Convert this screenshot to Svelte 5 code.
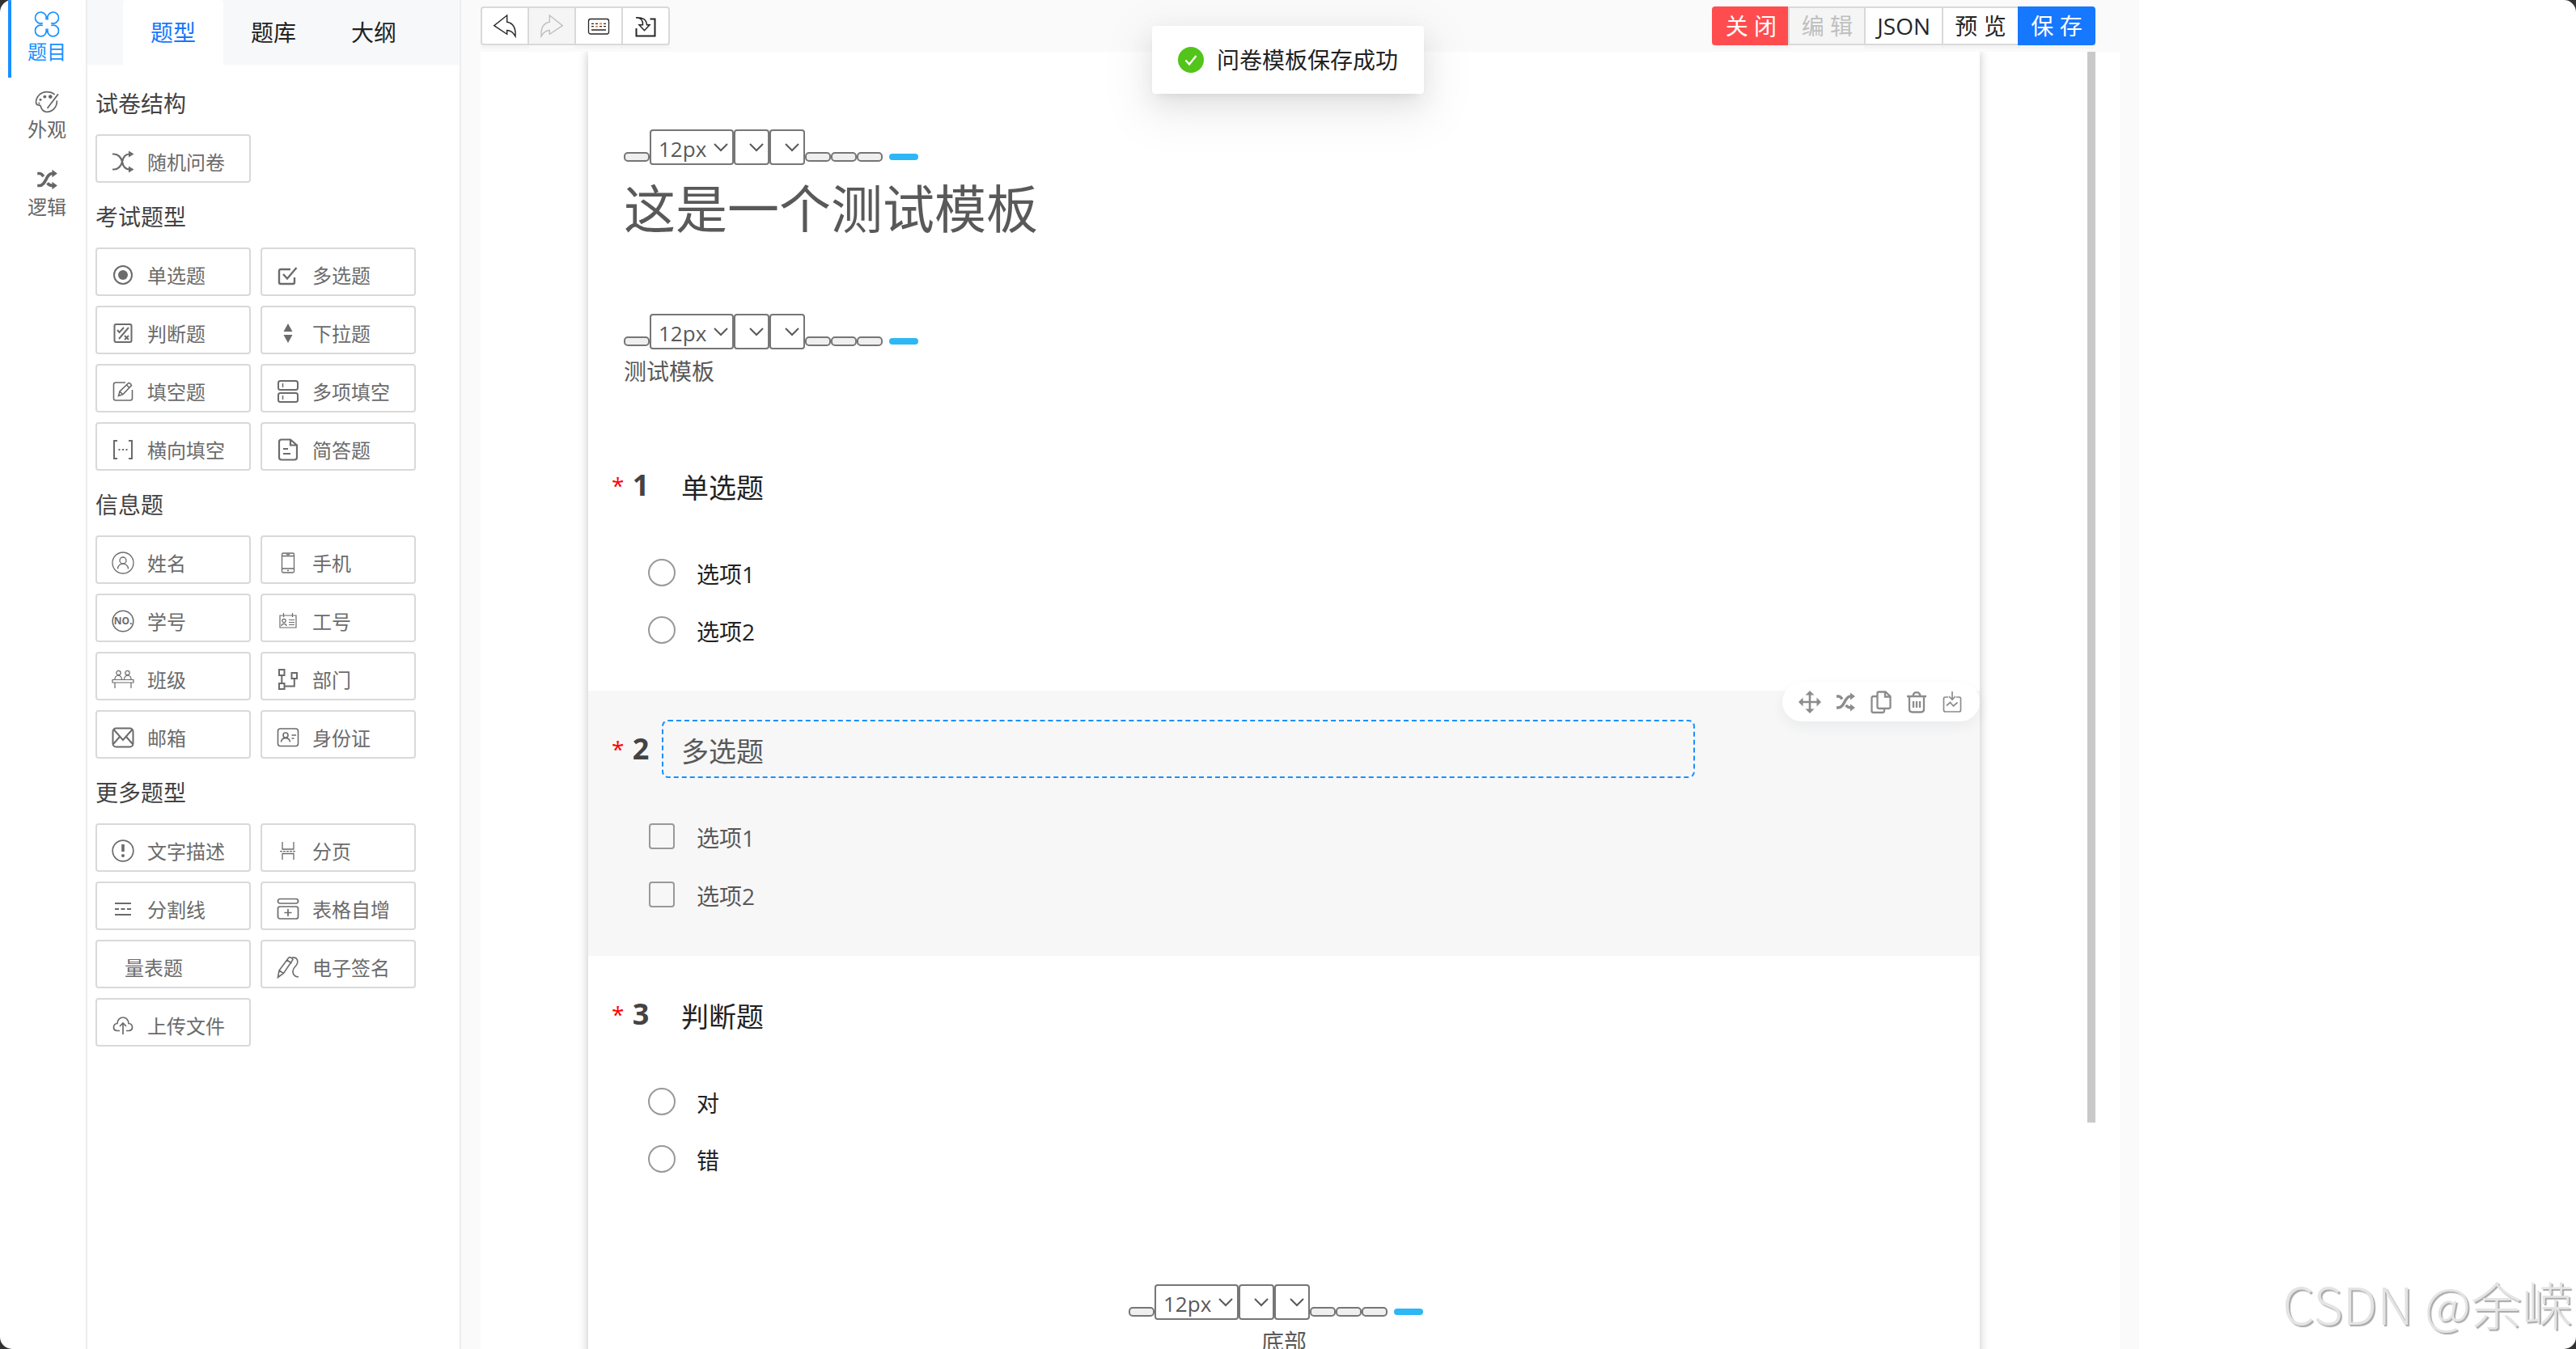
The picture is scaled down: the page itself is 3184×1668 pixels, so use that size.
<script lang="ts">
	type Tool = { label:string, icon?:string };

	const navItems = [
		{ label:'题目', icon:'apps' },
		{ label:'外观', icon:'palette' },
		{ label:'逻辑', icon:'shuffle' },
	];
	const tabs = ['题型', '题库', '大纲'];

	const groups: { title:string, tools:Tool[] }[] = [
		{ title:'试卷结构', tools:[{ label:'随机问卷', icon:'random' }] },
		{ title:'考试题型', tools:[
			{ label:'单选题', icon:'radio' },
			{ label:'多选题', icon:'check' },
			{ label:'判断题', icon:'judge' },
			{ label:'下拉题', icon:'updown' },
			{ label:'填空题', icon:'edit' },
			{ label:'多项填空', icon:'rows' },
			{ label:'横向填空', icon:'bracket' },
			{ label:'简答题', icon:'doc' },
		] },
		{ title:'信息题', tools:[
			{ label:'姓名', icon:'user' },
			{ label:'手机', icon:'phone' },
			{ label:'学号', icon:'number' },
			{ label:'工号', icon:'badge' },
			{ label:'班级', icon:'classroom' },
			{ label:'部门', icon:'dept' },
			{ label:'邮箱', icon:'mail' },
			{ label:'身份证', icon:'idcard' },
		] },
		{ title:'更多题型', tools:[
			{ label:'文字描述', icon:'notice' },
			{ label:'分页', icon:'pagebreak' },
			{ label:'分割线', icon:'divider' },
			{ label:'表格自增', icon:'addrow' },
			{ label:'量表题' },
			{ label:'电子签名', icon:'sign' },
			{ label:'上传文件', icon:'upload' },
		] },
	];

	const historyButtons = [
		{ icon:'undo', title:'撤销' },
		{ icon:'redo', title:'重做', disabled:true },
		{ icon:'keyboard', title:'快捷键' },
		{ icon:'import', title:'导入' },
	];
	const actions = [
		{ label:'关 闭', kind:'danger' },
		{ label:'编 辑', kind:'', disabled:true },
		{ label:'JSON', kind:'' },
		{ label:'预 览', kind:'' },
		{ label:'保 存', kind:'primary' },
	];

	const questions = [
		{ title:'单选题', type:'radio', options:['选项1', '选项2'] },
		{ title:'多选题', type:'checkbox', options:['选项1', '选项2'] },
		{ title:'判断题', type:'radio', options:['对', '错'] },
	];
	const itemTools = [
		{ icon:'move', title:'移动' },
		{ icon:'shuffle', title:'逻辑' },
		{ icon:'copy', title:'复制' },
		{ icon:'trash', title:'删除' },
		{ icon:'save', title:'收藏' },
	];

	let activeNav = $state(0);
	let activeTab = $state(0);
	let activeQuestion = $state(1);

	// everything is drawn on a 28 x 28 grid
	const icons: Record<string, string> = {
		apps:'<path d="M13 8.800A6.500 6.500 0 1 0 9.200 12.600M15 8.800A6.500 6.500 0 1 1 18.800 12.600M13 19.200A6.500 6.500 0 1 1 9.200 15.400M15 19.200A6.500 6.500 0 1 0 18.800 15.400" stroke-width="1.600"/>',
		palette:'<path d="M23 5.500C20 3 17.500 2.500 14 2.500C6 2.500 1 9 1.500 15C2 18.500 4.500 17 6 18C8 19.500 6.500 24.500 13 25.500C20 26.200 26 20 25.500 12.500M27 5L15.500 20L14.500 21.500" stroke-width="1.600"/><g fill="currentColor" stroke="none"><circle cx="11.500" cy="8" r="1.800"/><circle cx="18" cy="8" r="2.200"/><circle cx="6.500" cy="11.500" r="1.400"/><circle cx="5" cy="15.500" r="1"/></g>',
		shuffle:'<path d="M3 7H5.500C8 7 9 9 10 10.500M3 21H5.500C13 21 13 7 20 7H21M14.500 18C16 20 17.500 21 21 21" stroke-width="3.400"/><path d="M20 2.500L26 7L20 11.500ZM20 16.500L26 21L20 25.500Z" fill="currentColor" stroke="none"/>',
		random:'<path d="M1 4.500H3C8 4.500 12 9 13 14C14 19 17 23.500 22 23.500M1 23.500H3C8 23.500 12 19 13 14C14 9 17 4.500 22 4.500" stroke-width="2.200"/><path d="M21 0.500L27.500 4.500L21 8.500ZM21 19.500L27.500 23.500L21 27.500Z" fill="currentColor" stroke="none"/>',
		radio:'<circle cx="14" cy="14" r="11"/><circle cx="14" cy="14" r="6" fill="currentColor" stroke="none"/>',
		check:'<path d="M17 7H5Q3 7 3 9V23Q3 25 5 25H20Q22 25 22 23V17M8 13L13 18.500L24.500 5" stroke-width="2.400"/>',
		judge:'<rect x="3.500" y="3" width="21" height="22" rx="2"/><path d="M7 10L9.500 13L15 7M9 21L21 7M16 17L21 22M21 17L16 22"/>',
		updown:'<path d="M14 2L19.500 12H8.500ZM14 26L19.500 16H8.500Z" fill="currentColor" stroke="none"/>',
		edit:'<path d="M17 3H5Q2.500 3 2.500 5.500V22.500Q2.500 25 5 25H23Q25.500 25 25.500 22.500V12M8.500 19.500L10 14L21 3.500Q23 3 24.500 6.500L14 17.500ZM18.500 6L21.500 9M10 14L13.500 17.500" stroke-width="1.600"/>',
		rows:'<rect x="2" y="1" width="24" height="11" rx="2.500"/><rect x="2" y="16" width="24" height="11" rx="2.500"/><path d="M7.500 4V9M7.500 19V24" stroke-width="1.500"/>',
		bracket:'<path d="M7 3H3V25H7M21 3H25V25H21"/><path d="M8.500 14H10.500M13 14H15M17.500 14H19.500"/>',
		doc:'<path d="M17 1.500H6Q3 1.500 3 4.500V23.500Q3 26.500 6 26.500H22Q25 26.500 25 23.500V8.500ZM17 1.500V8.500H25M8 13H14M8 19H17" stroke-width="2.200"/>',
		user:'<circle cx="14" cy="14" r="13" stroke-width="1.300"/><circle cx="14" cy="11" r="4" stroke-width="1.300"/><path d="M7.500 21.500C7.500 13 20.500 13 20.500 21.500" stroke-width="1.300"/>',
		phone:'<rect x="6.500" y="2" width="15" height="24" rx="1.500" stroke-width="1.300"/><path d="M6.500 5.500H21.500M6.500 21H21.500M12 3.700H16M13 23.500H15" stroke-width="1.300"/>',
		number:'<circle cx="14" cy="14" r="12.800" stroke-width="1.600"/><text x="14" y="18" font-size="12" font-weight="700" text-anchor="middle" fill="currentColor" stroke="none">NO.</text>',
		badge:'<path d="M4 7H24V22H4ZM8.500 4V9M19.500 4V9M15 12.500H22M15 15.500H22M15 18.500H22M6 20C6 16.500 12 16.500 12 20" stroke-width="1.200"/><circle cx="9" cy="13.500" r="2.200" stroke-width="1.200"/>',
		classroom:'<path d="M1 14.500H27V18H1ZM4 18V25M24 18V25M4 14.500C3 7.500 13 7.500 12.500 14.500M15.500 14.500C15 7.500 25 7.500 24 14.500" stroke-width="1.200"/><circle cx="8.500" cy="6" r="2.700" stroke-width="1.200"/><circle cx="19.500" cy="6" r="2.700" stroke-width="1.200"/>',
		dept:'<path d="M3 2H9.500V9H3ZM3 19H9.500V26H3ZM18.500 6H25V13H18.500ZM6.300 9V19M9.500 22.500H21.800V13"/>',
		mail:'<rect x="1.500" y="2.500" width="25" height="23" rx="4"/><path d="M2.500 4L14 17L25.500 4M2 22L10 13M26 22L18 13"/>',
		idcard:'<rect x="1.500" y="3" width="25" height="21.500" rx="3" stroke-width="1.600"/><circle cx="11" cy="11" r="3" stroke-width="1.600"/><path d="M5.500 19.500C6 13 16 13 16.500 19.500M18.500 11H24M18.500 15H21.500" stroke-width="1.600"/>',
		notice:'<circle cx="14" cy="14" r="12.800" stroke-width="1.700"/><path d="M14 6V15" stroke-width="3.600"/><circle cx="14" cy="20" r="2" fill="currentColor" stroke="none"/>',
		pagebreak:'<path d="M7 3V12H21V3M7 25V17.500H21V25" stroke-width="1.300"/><path d="M4 14.700H24" stroke-width="1.300" stroke-dasharray="3 1"/>',
		divider:'<path d="M4 7H24M4 21H24M4 14H9M11.500 14H16.500M19 14H24" stroke-width="2.200"/>',
		addrow:'<rect x="1.500" y="1.500" width="25" height="5.500" rx="2.500" stroke-width="1.700"/><rect x="1.500" y="11" width="25" height="15" rx="2.500" stroke-width="1.700"/><path d="M14 14V23M9.500 18.500H18.500" stroke-width="1.700"/>',
		sign:'<path d="M1.500 26.500L3 18L14.500 2.500Q17 0 20 4.500L8.500 21.500ZM3 18L8.500 21.500M12.500 5L18.500 9M19 2C26 1 28 8 23 13C19 17 18 25 27 26" stroke-width="1.600"/>',
		upload:'<path d="M10 20.500H7C0.500 20 1.500 12 7 11.500C7.500 1.500 20.500 1.500 21 11.500C26.500 12 27.500 20 21 20.500H18M14 25V11M10 15L14 11L18 15" stroke-width="1.700"/>',
		undo:'<path d="M16.700 1L0.700 13.700L16.700 24.300V19.500Q23 19.500 27 27Q28 11 16.700 9.300Z" stroke-width="1.400"/>',
		redo:'<path d="M11.300 1L27.300 13.700L11.300 24.300V19.500Q5 19.500 1 27Q0 11 11.300 9.300Z" stroke-width="1.400"/>',
		keyboard:'<rect x="1.500" y="5.500" width="25" height="18.500" rx="2.500" stroke-width="1.300"/><path d="M5 11.300H8M10 11.300H13M20 11.300H23M5 14.700H8M15 14.700H18M20 14.700H23M5 19H23" stroke-width="1.300"/><path d="M15 11.300H18M10 14.700H13" stroke="#fa8c3c"/>',
		import:'<path d="M2.500 17V26.500H25.500V5.500H19.500"/><path d="M2 3.700Q11 4 10.500 12.700H6L12.500 19.700L19 12.700H15.500Q15 3 2 3.700Z" stroke-width="1.500"/>',
		move:'<path d="M14 3V25M3 14H25" stroke-width="2.600"/><path d="M14 0L19.500 5.500H8.500ZM14 28L19.500 22.500H8.500ZM0 14L5.500 8.500V19.500ZM28 14L22.500 8.500V19.500Z" fill="currentColor" stroke="none"/>',
		copy:'<path d="M9 7H4.500Q2.500 7 2.500 9V25Q2.500 27 4.500 27H15.500Q18 27 18 25V22M11 1.500H19.500L25.500 7V20Q25.500 22 23.500 22H11.500Q9.500 22 9.500 20V3Q9.500 1.500 11 1.500ZM19 2V7.500H25" stroke-width="2.300"/>',
		trash:'<path d="M2 7H26M5 7V23Q5 26.500 8.500 26.500H19.500Q23 26.500 23 23V7M9.500 7C10 0.500 18 0.500 18.500 7M10 13V21M14 13V21M18 13V21" stroke-width="2.300"/>',
		save:'<path d="M9 8H5Q3.500 8 3.500 10V24Q3.500 26 5.500 26H22.500Q24.500 26 24.500 24V10Q24.500 8 23 8H19M14 1V11M10 7L14 11L18 7M7 18.500L11.500 14.500L15.500 19L20.500 14.500" stroke-width="1.700"/>',
		down:'<path d="M4 10L12 18L20 10"/>',
	};
</script>

{#snippet icon(name:string)}
	<svg class="icon" viewBox="0 0 28 28" fill="none" stroke="currentColor" stroke-width="2" aria-hidden="true">{@html icons[name]}</svg>
{/snippet}

{#snippet pick(label:string, value:string)}
	<span class={['pick', { wide:value }]}>
		<select aria-label={label}><option>{value}</option></select>
		{@render icon('down')}
	</span>
{/snippet}

{#snippet textBar()}
	<div class="text-bar">
		<button class="chip" aria-label="加粗"></button>
		{@render pick('字号', '12px')}
		{@render pick('颜色', '')}
		{@render pick('背景', '')}
		<button class="chip" aria-label="左对齐"></button>
		<button class="chip" aria-label="居中"></button>
		<button class="chip" aria-label="右对齐"></button>
		<button class="chip blue" aria-label="完成"></button>
	</div>
{/snippet}

<div class="app">
	<nav class="side">
		{#each navItems as item, i}
			<button class={['side-item', { active:activeNav === i }]} onclick={() => activeNav = i}>
				{@render icon(item.icon)}
				<span>{item.label}</span>
			</button>
		{/each}
	</nav>

	<aside class="panel">
		<div class="tabs">
			{#each tabs as tab, i}
				<button class={['tab', { active:activeTab === i }]} onclick={() => activeTab = i}>{tab}</button>
			{/each}
		</div>
		<div class="groups">
			{#each groups as group}
				<section>
					<h2>{group.title}</h2>
					<div class="tools">
						{#each group.tools as tool}
							<button class="tool">
								{#if tool.icon}{@render icon(tool.icon)}{/if}
								<span>{tool.label}</span>
							</button>
						{/each}
					</div>
				</section>
			{/each}
		</div>
	</aside>

	<main>
		<header>
			<div class="btn-group">
				{#each historyButtons as b}
					<button class="btn square" disabled={b.disabled} aria-label={b.title}>{@render icon(b.icon)}</button>
				{/each}
			</div>
			<div class="btn-group">
				{#each actions as a}
					<button class={['btn', a.kind]} disabled={a.disabled}>{a.label}</button>
				{/each}
			</div>
		</header>

		<div class="canvas">
			<div class="scroll">
				<article class="page">
					<div class="block first">
						{@render textBar()}
						<h1>这是一个测试模板</h1>
					</div>
					<div class="block">
						{@render textBar()}
						<p>测试模板</p>
					</div>

					{#each questions as q, i}
						<section class={['question', { active:activeQuestion === i }]}>
							<div class="q-head">
								<span class="star">*</span>
								<span class="num">{i + 1}</span>
								<div class="q-title">{q.title}</div>
							</div>
							<div class="options">
								{#each q.options as option}
									<label class={q.type}>
										<input type={q.type} name="q{i}" />
										<span>{option}</span>
									</label>
								{/each}
							</div>
							{#if activeQuestion === i}
								<div class="item-tools">
									{#each itemTools as t}
										<button aria-label={t.title}>{@render icon(t.icon)}</button>
									{/each}
								</div>
							{/if}
						</section>
					{/each}

					<div class="block foot">
						{@render textBar()}
						<p>底部</p>
					</div>
				</article>
			</div>
			<div class="track"><div class="thumb"></div></div>
		</div>
	</main>

	<div class="toast" role="status">
		<svg viewBox="0 0 32 32" aria-hidden="true">
			<circle cx="16" cy="16" r="16" fill="#52c41a" />
			<path d="M9.500 16.500L14 21.500L22.500 11" fill="none" stroke="#fff" stroke-width="2.400" />
		</svg>
		<span>问卷模板保存成功</span>
	</div>
	<div class="watermark">CSDN @余嵘</div>
</div>

<style>
:global(body) { margin:0; background:#333; }
.app {
	position: relative;
	display: grid;
	grid-template-columns: 108px 462px minmax(0, 1fr) 540px;
	height: 100vh;
	overflow: hidden;
	border-radius: 15px;
	background: #fff;
	color: #595959;
	font: 28px/44px "Open Sans", "Noto Sans CJK SC", sans-serif;
}
.app * { box-sizing: border-box; }
button, select {
	margin: 0;
	padding: 0;
	border: 0;
	background: none;
	color: inherit;
	font: inherit;
	cursor: pointer;
}
h1, h2, p { margin:0; font-weight:normal; }
.icon { display:block; width:28px; height:28px; flex:none; overflow:visible; }

/* left rail */
.side {
	padding-left: 10px;
	border-right: 2px solid #ededed;
}
.side-item {
	display: flex;
	flex-direction: column;
	align-items: center;
	width: 100%;
	height: 96px;
	padding-top: 14px;
	color: #666;
	font-size: 24px;
	line-height: 36px;
}
.side-item .icon { width:30px; height:32px; }
.side-item.active { color:#1890ff; box-shadow:inset 4px 0 #1890ff; }

/* question type panel */
.panel { border-right:2px solid #ededed; }
.tabs {
	display: flex;
	height: 80px;
	padding-left: 44px;
	background: #f7f8fa;
}
.tab { padding:0 34px; color:#222; }
.tab.active { background:#fff; color:#1677ff; border-radius:4px 4px 0 0; }
.groups { padding:26px 10px; }
section h2 { height:60px; color:#434343; font-size:28px; line-height:44px; }
.tools {
	display: grid;
	grid-template-columns: 192px 192px;
	gap: 12px;
	margin-bottom: 20px;
}
.tool {
	display: flex;
	align-items: center;
	height: 60px;
	padding: 8px 0 0 18px;
	border: 2px solid #d9d9d9;
	border-radius: 4px;
	color: #6b6b6b;
	font-size: 24px;
}
.tool span { margin-left:16px; padding-top:2px; }

/* main area */
main {
	display: flex;
	flex-direction: column;
	min-height: 0;
	padding: 0 24px;
	background: #fafafa;
}
header {
	display: flex;
	justify-content: space-between;
	height: 64px;
	padding: 8px 30px 8px 0;
}
.btn-group { display:flex; }
.btn {
	display: flex;
	align-items: center;
	justify-content: center;
	min-width: 96px;
	height: 48px;
	padding: 0 14px;
	border: 2px solid #d9d9d9;
	background: #fff;
	color: #262626;
	box-shadow: 0 4px 0 rgba(0,0,0,.02);
}
.btn + .btn { margin-left:-2px; }
.btn:first-child { border-radius:4px 0 0 4px; }
.btn:last-child { border-radius:0 4px 4px 0; }
.btn.square { width:60px; min-width:0; }
.btn:disabled { background:#f5f5f5; color:#bfbfbf; box-shadow:none; cursor:not-allowed; }
.btn.danger { border-color:#ff4d4f; background:#ff4d4f; color:#fff; }
.btn.primary { border-color:#1677ff; background:#1677ff; color:#fff; }

.canvas {
	display: flex;
	flex: 1;
	min-height: 0;
	padding-right: 30px;
	background: #fff;
}
.scroll { flex:1; min-width:0; overflow:hidden; }
.track { width:10px; }
.thumb { height:calc(82% + 9px); background:#c9c9c9; }
.page {
	max-width: 1720px;
	min-height: 100%;
	margin: 0 auto;
	background: #fff;
	box-shadow: 0 0 12px rgba(0,0,0,.24);
}

.block { padding:0 44px; height:140px; }
.block.first { padding-top:96px; height:324px; }
.block h1 { padding-top:12px; font-size:64px; line-height:84px; }
.block p { padding-top:5px; }
.block.foot {
	display: flex;
	flex-direction: column;
	align-items: center;
	height: 260px;
	padding-top: 80px;
}
.foot .text-bar { padding-right:20px; }

.text-bar { display:flex; align-items:flex-end; height:44px; }
.chip {
	width: 32px;
	height: 12px;
	margin-bottom: 4px;
	border: 2px solid #767676;
	border-radius: 5px;
	background: #efefef;
}
.chip.blue {
	width: 36px;
	height: 8px;
	margin: 0 0 6px 8px;
	border: 0;
	background: #2db7f5;
}
.pick { display:grid; width:44px; height:44px; align-items:center; }
.pick.wide { width:104px; }
.pick select, .pick .icon { grid-area:1 / 1; }
.pick select {
	appearance: none;
	width: 100%;
	height: 44px;
	padding: 4px 0 0 9px;
	border: 2px solid #767676;
	border-radius: 4px;
	background: #fff;
	font-size: 26px;
	line-height: 36px;
}
.pick .icon { justify-self:end; pointer-events:none; }

.question { position:relative; padding:36px 0 40px 29px; color:#222; }
.question.active { background:#f7f7f7; color:#595959; }
.q-head { display:flex; align-items:center; height:72px; }
.star { width:18px; color:#f00; font-size:28px; }
.num { width:36px; margin-right:8px; color:#434343; font-size:36px; font-weight:700; text-align:center; }
.q-title {
	flex: 1;
	height: 72px;
	margin-right: 352px;
	padding: 4px 22px 0;
	border: 2px dashed transparent;
	border-radius: 8px;
	font-size: 34px;
	line-height: 66px;
}
.active .q-title { border-color:#1890ff; }
.options { padding:36px 0 0 45px; }
.options label { display:flex; align-items:center; gap:26px; height:71px; }
.options label.checkbox { height:72px; }
.options span { padding-top:4px; }
input {
	appearance: none;
	width: 34px;
	height: 34px;
	margin: 0;
	border: 2px solid #999;
	border-radius: 50%;
}
.checkbox input { width:32px; height:32px; margin:0 1px; border-radius:4px; }
input:checked { background:#1890ff; }

.item-tools {
	position: absolute;
	top: -10px;
	right: 0;
	display: flex;
	gap: 16px;
	padding: 10px 20px;
	border-radius: 24px;
	background: #fff;
	color: #8c8c8c;
	box-shadow: 0 6px 16px rgba(31,45,90,.06);
}

.toast {
	position: absolute;
	top: 32px;
	left: 50%;
	display: flex;
	align-items: center;
	gap: 16px;
	height: 84px;
	padding: 0 32px;
	border-radius: 4px;
	background: #fff;
	color: #222;
	transform: translateX(-50%);
	box-shadow: 0 6px 12px -8px rgba(0,0,0,.12), 0 12px 32px rgba(0,0,0,.08), 0 18px 56px 16px rgba(0,0,0,.05);
}
.toast svg { width:32px; height:32px; }
.watermark {
	position: absolute;
	right: 4px;
	bottom: 12px;
	color: #e4e4e4;
	font: 300 63px/90px "Noto Sans CJK SC", sans-serif;
	text-shadow: 2px 2px 1px #aaa;
	pointer-events: none;
}
</style>
